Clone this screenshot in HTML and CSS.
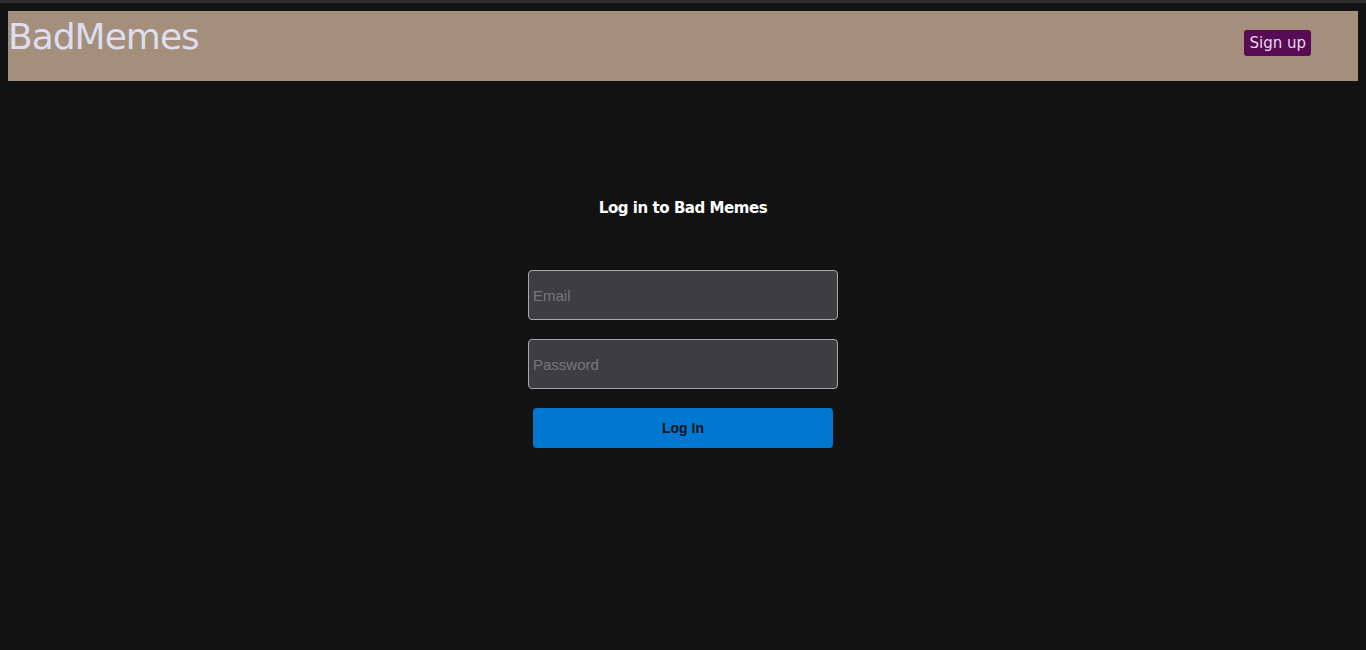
FILE: index.html
```html
<!DOCTYPE html>
<html>
<head>
<meta charset="utf-8">
<link rel="stylesheet" href="styles.css">
</head>
<body>
<div class="topstrip"></div>
<header class="nav">
  <div class="brand">BadMemes</div>
  <a class="signup" href="#">Sign up</a>
</header>
<main class="login">
  <h1 class="title">Log in to Bad Memes</h1>
  <form class="form">
    <input class="field" type="email" placeholder="Email">
    <input class="field" type="password" placeholder="Password">
    <button class="btn" type="button">Log In</button>
  </form>
</main>
</body>
</html>
```
FILE: styles.css
```css
html, body { margin: 0; padding: 0; }
body {
  background: #121212;
  font-family: "DejaVu Sans", sans-serif;
  padding: 0 8px;
}
.topstrip {
  height: 3px;
  background: #2e2e2e;
  margin: 0 -8px 8px;
}
.nav {
  height: 70px;
  background: #a38f7c;
  display: flex;
  justify-content: space-between;
  align-items: flex-start;
}
.brand {
  color: #dcdef0;
  font-size: 36px;
  line-height: 52px;
  letter-spacing: -1px;
}
.signup {
  margin-top: 19px;
  margin-right: 47px;
  background: #560b52;
  color: #ead8ef;
  text-decoration: none;
  font-size: 15px;
  line-height: 26px;
  padding: 0 5px;
  border-radius: 3px;
}
.login {
  display: flex;
  flex-direction: column;
  align-items: center;
}
.title {
  color: #ffffff;
  font-family: "DejaVu Sans", sans-serif;
  font-size: 15px;
  font-weight: bold;
  margin: 118px 0 0;
  line-height: 18px;
  letter-spacing: -0.45px;
}
.form {
  margin-top: 53px;
  display: flex;
  flex-direction: column;
  align-items: center;
}
.field {
  box-sizing: border-box;
  width: 310px;
  height: 50px;
  background: #3e3d42;
  border: 1px solid #a9a9a9;
  border-radius: 4px;
  padding: 0 4px;
  font-family: "Liberation Sans", Arial, sans-serif;
  font-size: 15px;
  color: #ddd;
  margin-bottom: 19px;
  outline: none;
}
.field::placeholder { color: #77767b; }
.btn {
  width: 300px;
  height: 40px;
  background: #0078d0;
  border: none;
  border-radius: 4px;
  font-family: "Liberation Sans", Arial, sans-serif;
  font-weight: bold;
  font-size: 14px;
  color: #111;
}
```
